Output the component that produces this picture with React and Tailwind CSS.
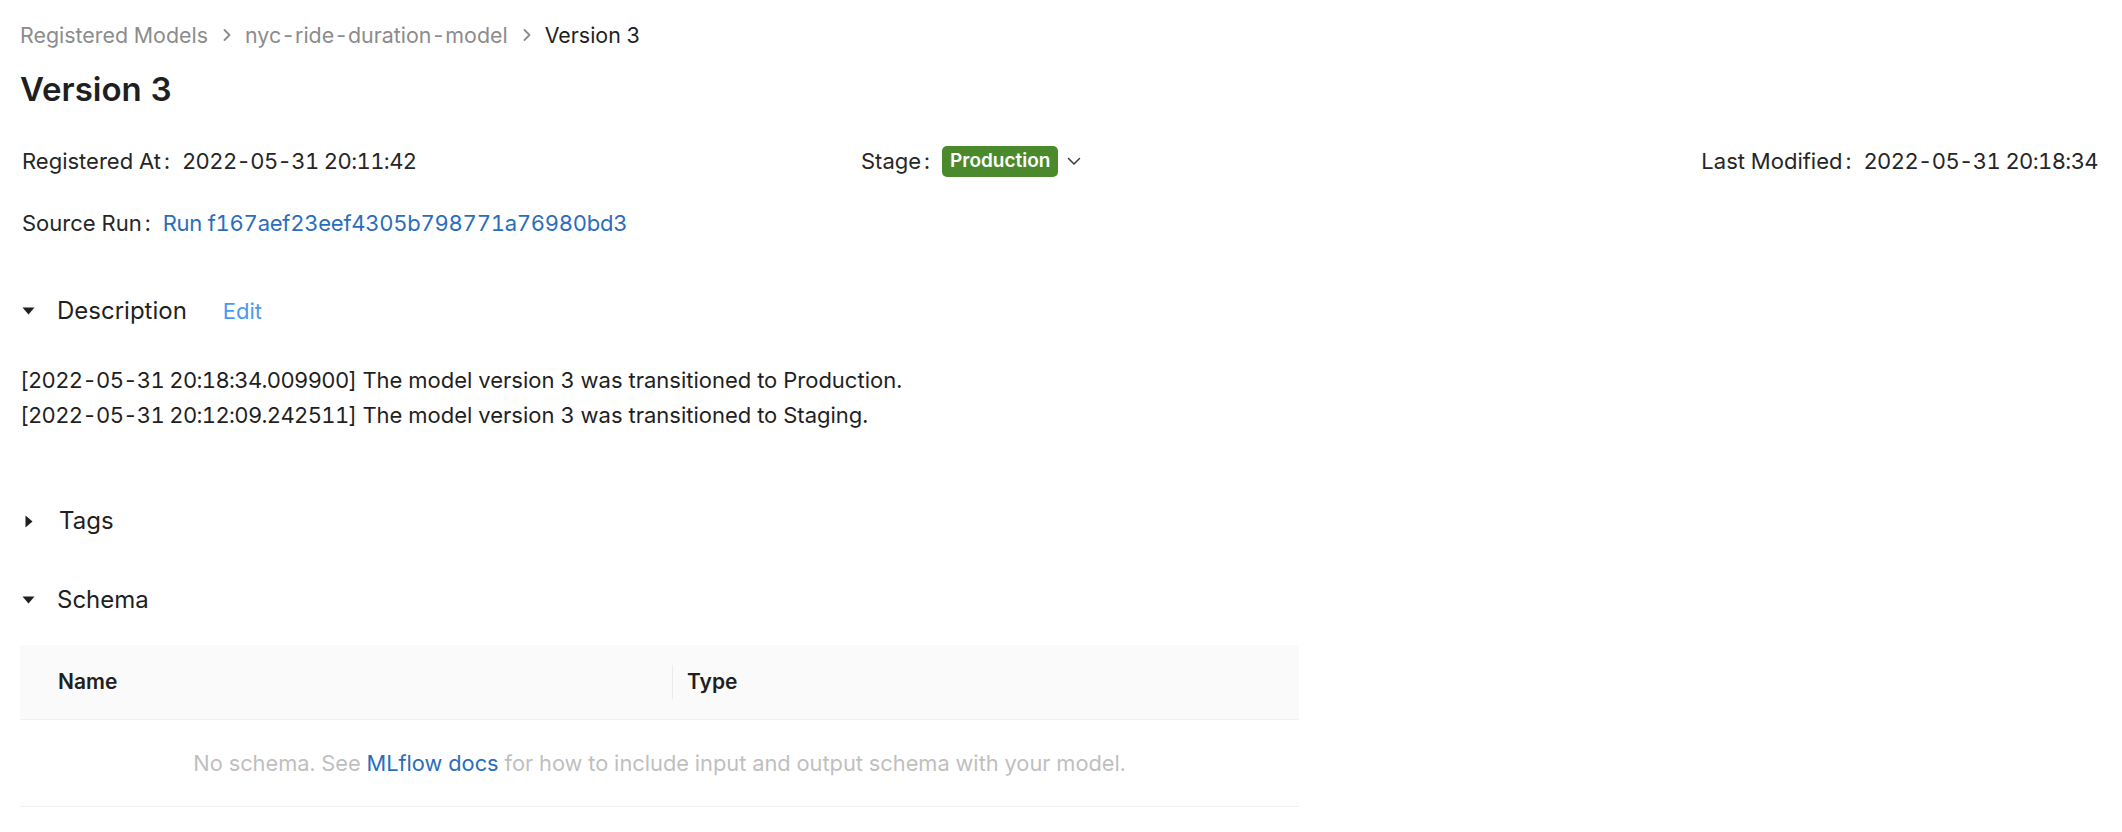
import React from 'react';

const font = { fontFamily: 'Inter, "Noto Sans", sans-serif' };

const Crumb = () => (
  <svg width="12" height="16" viewBox="0 0 12 16" className="ml-[13px] mr-[12px]">
    <path d="M3.5 3 L8.5 8 L3.5 13" fill="none" stroke="#8c8c8c" strokeWidth="1.8" strokeLinecap="round" strokeLinejoin="round" />
  </svg>
);

const CaretDown = () => (
  <svg width="13" height="8" viewBox="0 0 13 8" className="shrink-0">
    <path d="M0.5 0.5 H12.5 L6.5 7.5 Z" fill="#1f1f1f" />
  </svg>
);

const CaretRight = () => (
  <svg width="8" height="13" viewBox="0 0 8 13" className="shrink-0 ml-[3px] mr-[2px]">
    <path d="M0.5 0.5 V12.5 L7.5 6.5 Z" fill="#1f1f1f" />
  </svg>
);

const Label = ({ children }) => (
  <span className="text-[#262626]">
    {children}
    <span className="ml-[3px] mr-[12px]">:</span>
  </span>
);

export default function App() {
  return (
    <div className="min-h-screen bg-white px-5 text-[#262626] tabular-nums" style={font}>
      {/* Breadcrumb */}
      <div className="flex items-center h-[40px] mt-[15px] text-[21.4px]">
        <span className="text-[#8c8c8c]">Registered Models</span>
        <Crumb />
        <span className="text-[#8c8c8c]">nyc-ride-duration-model</span>
        <Crumb />
        <span className="text-[#1f1f1f]">Version 3</span>
      </div>

      {/* Title */}
      <div className="flex items-center h-[70px]">
        <h1 className="text-[33px] font-semibold text-[#1f1f1f]">Version 3</h1>
      </div>

      {/* Metadata */}
      <div className="flex items-center h-[72px] text-[22px] pl-[2px] pr-[4px]">
        <div className="w-[839px] shrink-0">
          <Label>Registered At</Label>
          <span className="tracking-[-0.6px]">2022-05-31 20:11:42</span>
        </div>
        <div className="flex-1 flex items-center">
          <Label>Stage</Label>
          <span className="inline-flex items-center h-[31px] px-[8px] rounded-[5px] bg-[#4a8a2c] text-white text-[19px] font-semibold">
            Production
          </span>
          <svg width="14" height="9" viewBox="0 0 14 9" className="ml-[9px]">
            <path d="M1.5 1.5 L7 7 L12.5 1.5" fill="none" stroke="#3a3a3a" strokeWidth="1.5" strokeLinecap="round" strokeLinejoin="round" />
          </svg>
        </div>
        <div className="shrink-0">
          <Label>Last Modified</Label>
          <span className="tracking-[-0.6px]">2022-05-31 20:18:34</span>
        </div>
      </div>

      <div className="flex items-center h-[52px] text-[22px] pl-[2px]">
        <Label>Source Run</Label>
        <a className="text-[#2a6ebb] tracking-[-0.25px]">Run f167aef23eef4305b798771a76980bd3</a>
      </div>

      {/* Description */}
      <div className="flex items-center h-[60px] mt-[32px] pl-[2px]">
        <CaretDown />
        <span className="ml-[22px] text-[24px] text-[#1f1f1f]">Description</span>
        <a className="ml-[36px] text-[22px] text-[#4a9af0]">Edit</a>
      </div>
      <div className="mt-[22px] text-[22px] leading-[35px] text-[#1f1f1f]">
        <div>
          <span className="tracking-[-0.65px]">[2022-05-31 20:18:34.009900]</span> The model version 3 was transitioned to Production.
        </div>
        <div>
          <span className="tracking-[-0.65px]">[2022-05-31 20:12:09.242511]</span> The model version 3 was transitioned to Staging.
        </div>
      </div>

      {/* Tags */}
      <div className="flex items-center h-[60px] mt-[58px] pl-[2px]">
        <CaretRight />
        <span className="ml-[24px] text-[24px] text-[#1f1f1f]">Tags</span>
      </div>

      {/* Schema */}
      <div className="flex items-center h-[60px] mt-[19px] pl-[2px]">
        <CaretDown />
        <span className="ml-[22px] text-[24px] text-[#1f1f1f]">Schema</span>
      </div>

      <div className="w-[1279px] mt-[15px]">
        <div className="flex items-center h-[75px] bg-[#fafafa] border-b border-[#f0f0f0] text-[21px] font-semibold text-[#1f1f1f]">
          <div className="w-[652px] pl-[38px]">Name</div>
          <div className="w-px h-[34px] bg-[#ebebeb]" />
          <div className="pl-[14px]">Type</div>
        </div>
        <div className="flex items-center justify-center h-[87px] border-b border-[#f0f0f0] text-[21.8px] text-[#bfbfbf]">
          <span>
            No schema. See <a className="text-[#2a6ebb]">MLflow docs</a> for how to include input and output schema with your model.
          </span>
        </div>
      </div>
    </div>
  );
}
